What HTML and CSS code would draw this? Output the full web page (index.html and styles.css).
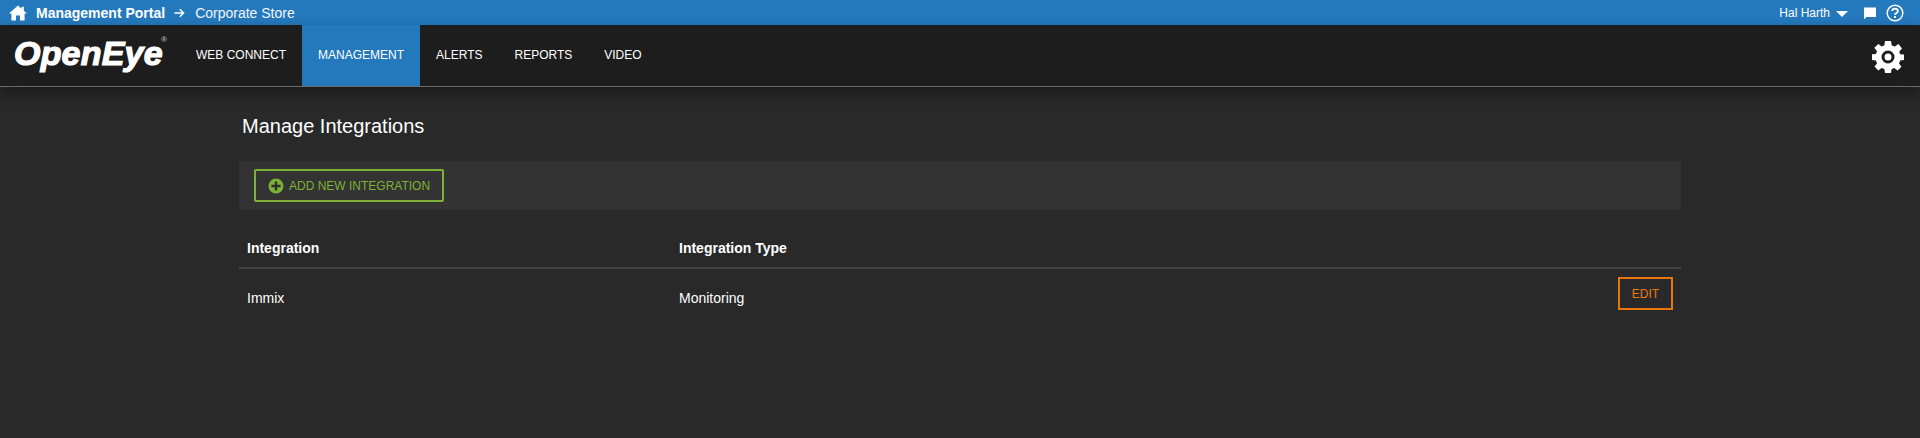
FILE: index.html
```html
<!DOCTYPE html>
<html lang="en">
<head>
<meta charset="utf-8">
<title>Manage Integrations</title>
<link rel="stylesheet" href="styles.css">
</head>
<body>
<header class="topbar">
  <div class="crumbs">
    <svg class="home" viewBox="0 0 18 16" width="18" height="16"><path fill="#fff" d="M9 0.5 L12.6 3.7V1.8H14.8V5.7L18 8.6H15.6V15.4H11V10.4H7V15.4H2.4V8.6H0Z"/></svg>
    <strong class="portal">Management Portal</strong>
    <svg class="arrow" viewBox="0 0 11 10" width="11" height="10"><path fill="none" stroke="#fff" stroke-width="1.4" d="M0.5 5H9.5M5.8 1.2L9.6 5L5.8 8.8"/></svg>
    <span class="store">Corporate Store</span>
  </div>
  <div class="user">
    <span class="username">Hal Harth</span>
    <span class="caret"></span>
    <svg class="chat" viewBox="0 0 14 14" width="14" height="14"><path fill="#fff" d="M1 1.5H13V11H3.5L1 13.5Z"/></svg>
    <svg class="help" viewBox="0 0 18 18" width="18" height="18"><circle cx="9" cy="9" r="7.8" fill="none" stroke="#fff" stroke-width="1.5"/><path fill="none" stroke="#fff" stroke-width="1.8" d="M6.2 7.1C6.2 3.9 11.9 3.9 11.9 7C11.9 9 9 8.8 9 11"/><rect x="8" y="12" width="2" height="2" fill="#fff"/></svg>
  </div>
</header>
<nav class="navbar">
  <div class="logo">OpenEye<span class="reg">®</span></div>
  <ul class="menu">
    <li class="item">WEB CONNECT</li>
    <li class="item active">MANAGEMENT</li>
    <li class="item">ALERTS</li>
    <li class="item">REPORTS</li>
    <li class="item">VIDEO</li>
  </ul>
  <svg class="gear" viewBox="0 0 32 32" width="32" height="32"><path fill="#fff" fill-rule="evenodd" d="M13 0H19L19.8 4.4L22.8 5.6L26.5 3L30 7.5L27.2 10.7L28.2 13.3L32 13.5V19L28.2 19.5L27 22.4L29.5 25.8L25.6 29.5L22.2 27L19.6 28L19 32H13L12.4 28L9.6 27L6.3 29.5L2.5 25.6L5 22.4L3.9 19.5L0 19V13.3L3.9 12.9L5 10.2L2.3 6.8L6.4 3L9.6 5.4L12.4 4.3ZM16 9.5A6.5 6.5 0 1 0 16 22.5A6.5 6.5 0 1 0 16 9.5ZM16 12.5A3.5 3.5 0 1 1 16 19.5A3.5 3.5 0 1 1 16 12.5Z"/></svg>
</nav>
<main class="content">
  <h1 class="title">Manage Integrations</h1>
  <div class="toolbar">
    <button class="add" type="button">
      <svg class="plus" viewBox="0 0 16 16" width="16" height="16"><circle cx="8" cy="8" r="7.5" fill="#7cb133"/><path stroke="#2f2f2f" stroke-width="2.4" d="M8 3.4V12.6M3.4 8H12.6"/></svg>
      ADD NEW INTEGRATION
    </button>
  </div>
  <table class="grid">
    <thead>
      <tr><th class="col-name">Integration</th><th class="col-type">Integration Type</th><th></th></tr>
    </thead>
    <tbody>
      <tr><td>Immix</td><td>Monitoring</td><td class="actions"><button class="edit" type="button">EDIT</button></td></tr>
    </tbody>
  </table>
</main>
</body>
</html>
```

FILE: styles.css
```css
* { box-sizing: border-box; }
html, body { margin: 0; height: 100%; }
body {
  background: #292929;
  color: #fff;
  font-family: "Liberation Sans", Arial, sans-serif;
  overflow: hidden;
}
.topbar {
  height: 25px;
  background: #2479bd;
  display: flex;
  justify-content: space-between;
  align-items: center;
  padding: 0 16px 0 9px;
}
.crumbs, .user { display: flex; align-items: center; }
.home { margin-right: 9px; }
.portal { font-size: 14px; }
.arrow { margin: 0 10px 0 9px; }
.store { font-size: 14px; color: #f2f6fa; }
.user { font-size: 12px; }
.caret {
  width: 0; height: 0;
  margin: 2px 0 0 6px;
  border-left: 6px solid transparent;
  border-right: 6px solid transparent;
  border-top: 6px solid #fff;
}
.chat { margin-left: 15px; }
.help { margin-left: 9px; }
.navbar {
  height: 62px;
  background: #1d1d1d;
  border-bottom: 1px solid #6a6a6a;
  display: flex;
  align-items: stretch;
  padding-left: 14px;
  padding-right: 16px;
  box-shadow: 0 6px 14px rgba(0,0,0,.35);
  position: relative;
}
.logo {
  width: 166px;
  font-size: 34px;
  line-height: 57px;
  font-weight: 700;
  font-style: italic;
  letter-spacing: 0.2px;
  -webkit-text-stroke: 1.2px #fff;
  position: relative;
}
.reg {
  position: absolute;
  left: 147px;
  top: -14px;
  font-size: 8px;
  font-style: normal;
  letter-spacing: 0;
  -webkit-text-stroke: 0;
  color: #aaa;
}
.menu {
  list-style: none;
  margin: 0;
  padding: 0;
  display: flex;
  flex: 1;
}
.item {
  font-size: 12px;
  line-height: 61px;
  padding: 0 16px;
}
.active { background: #2479bd; }
.gear { align-self: center; margin-top: 2px; }
.content { padding: 0 239px; }
.title {
  font-size: 20px;
  font-weight: 400;
  line-height: 24px;
  margin: 0;
  padding: 27px 0 0 3px;
  height: 74px;
}
.toolbar {
  height: 49px;
  background: #333;
  padding: 8px 0 0 15px;
}
.add {
  height: 33px;
  width: 190px;
  border: 2px solid #7cb133;
  border-radius: 2px;
  background: transparent;
  color: #7cb133;
  font: 12px "Liberation Sans", Arial, sans-serif;
  display: flex;
  align-items: center;
  gap: 5px;
  padding: 0 0 0 12px;
}
.grid {
  width: 100%;
  border-collapse: collapse;
  margin-top: 18px;
  font-size: 14px;
}
.grid th {
  text-align: left;
  height: 40px;
  padding: 0 8px;
  border-bottom: 2px solid #444;
}
.grid td { height: 59px; padding: 0 8px; }
.col-name { width: 432px; }
.actions { text-align: right; }
.edit {
  display: block;
  margin: 0 0 9px auto;
  width: 55px;
  height: 33px;
  border: 2px solid #e9760c;
  background: transparent;
  color: #ed7a0d;
  font: 12px "Liberation Sans", Arial, sans-serif;
  padding: 0;
}
```
